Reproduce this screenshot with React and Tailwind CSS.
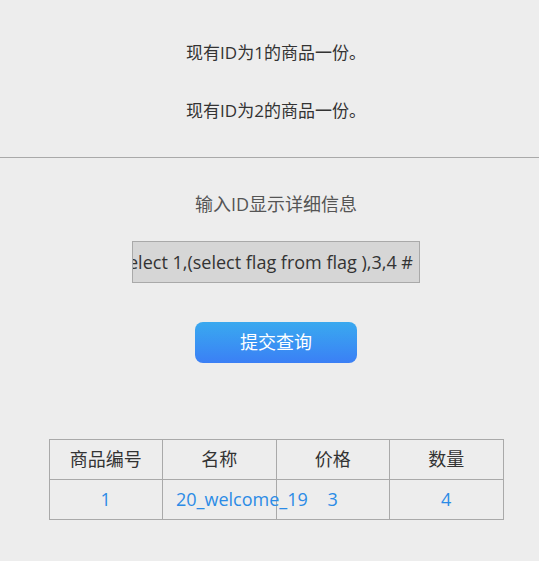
export default function App() {
  const font = { fontFamily: '"Open Sans", "Noto Sans CJK SC", sans-serif' };
  return (
    <div className="min-h-[561px] w-full bg-[#ededed] text-[#333]" style={font}>
      <div className="flex flex-col items-center pl-[13px] pt-[41px] text-[17px] leading-[24px]">
        <p className="h-[24px]">现有ID为1的商品一份。</p>
        <p className="mt-[34px] h-[24px]">现有ID为2的商品一份。</p>
      </div>
      <div className="mt-[34px] h-px bg-[#a9a9a9]" />
      <div className="flex flex-col items-center pl-[13px]">
        <p className="mt-[34px] h-[24px] text-[18px] leading-[24px] text-[#555]">输入ID显示详细信息</p>
        <div className="mt-[25px] flex h-[42px] w-[288px] items-center justify-end overflow-hidden whitespace-nowrap border border-[#a9a9a9] bg-[#d6d6d6] pr-[6px] text-[18px] text-[#333]">
          1' union select 1,(select flag from flag ),3,4 #
        </div>
        <button className="mt-[39px] h-[41px] w-[162px] rounded-[8px] bg-gradient-to-b from-[#3aa9ef] to-[#3b7ff5] text-[18px] text-white">
          提交查询
        </button>
      </div>
      <div className="mt-[76px] flex justify-center pl-[13px]">
        <table className="table-fixed border-collapse text-[18px]" style={{ width: 455 }}>
          <tbody>
            <tr className="h-[40px]">
              {['商品编号', '名称', '价格', '数量'].map((t) => (
                <td key={t} className="w-[113.5px] border border-[#a9a9a9] text-center text-[#333]">{t}</td>
              ))}
            </tr>
            <tr className="h-[40px] text-[#2b8be6]">
              <td className="border border-[#a9a9a9] text-center">1</td>
              <td className="whitespace-nowrap border border-[#a9a9a9] pl-[13px] text-left">20_welcome_19</td>
              <td className="border border-[#a9a9a9] text-center">3</td>
              <td className="border border-[#a9a9a9] text-center">4</td>
            </tr>
          </tbody>
        </table>
      </div>
    </div>
  );
}
